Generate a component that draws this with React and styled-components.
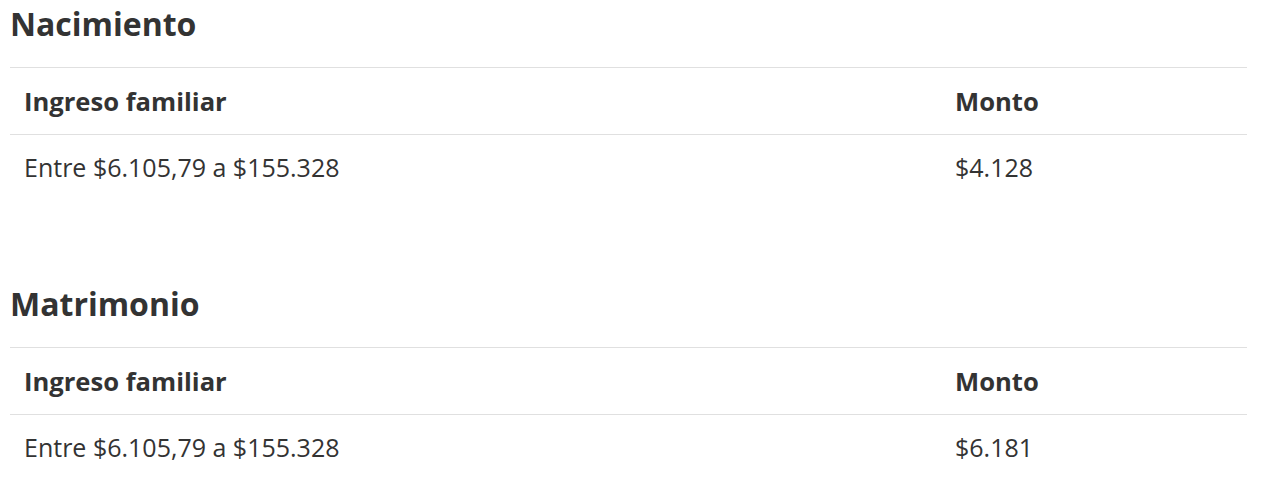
import styled, {createGlobalStyle} from 'styled-components';

const GlobalStyle = createGlobalStyle`
  body {
    margin: 0;
    background: #ffffff;
    font-family: 'Open Sans', 'Liberation Sans', sans-serif;
    color: #333333;
  }
`;

const sections = [
  {title: 'Nacimiento', rango: 'Entre $6.105,79 a $155.328', monto: '$4.128'},
  {title: 'Matrimonio', rango: 'Entre $6.105,79 a $155.328', monto: '$6.181'},
];

export default function App() {
  return (
    <>
      <GlobalStyle />
      <Page>
        {sections.map((s) => (
          <Section key={s.title}>
            <Title>{s.title}</Title>
            <Table>
              <Row>
                <Cell $head>Ingreso familiar</Cell>
                <Cell $head>Monto</Cell>
              </Row>
              <Row>
                <Cell>{s.rango}</Cell>
                <Cell>{s.monto}</Cell>
              </Row>
            </Table>
          </Section>
        ))}
      </Page>
    </>
  );
}

const Page = styled.div`
  width: 1237px;
  padding-left: 10px;
  display: flex;
  flex-direction: column;
  gap: 79px;
`;

const Section = styled.section`
  display: flex;
  flex-direction: column;
`;

const Title = styled.h2`
  margin: 0;
  padding-top: 2px;
  height: 65px;
  font-size: 32px;
  line-height: 44px;
  font-weight: 700;
  color: #333333;
`;

const Table = styled.div`
  display: flex;
  flex-direction: column;
`;

const Row = styled.div`
  display: grid;
  grid-template-columns: 931px 1fr;
  height: 66px;
  border-top: 1px solid #e0e0e0;
  align-items: center;
`;

const Cell = styled.div`
  padding: 0 14px;
  font-size: ${({$head}) => ($head ? '25.6px' : '25px')};
  font-weight: ${({$head}) => ($head ? 700 : 400)};
  margin-top: ${({$head}) => ($head ? '1px' : '-3px')};
  color: #333333;
`;
